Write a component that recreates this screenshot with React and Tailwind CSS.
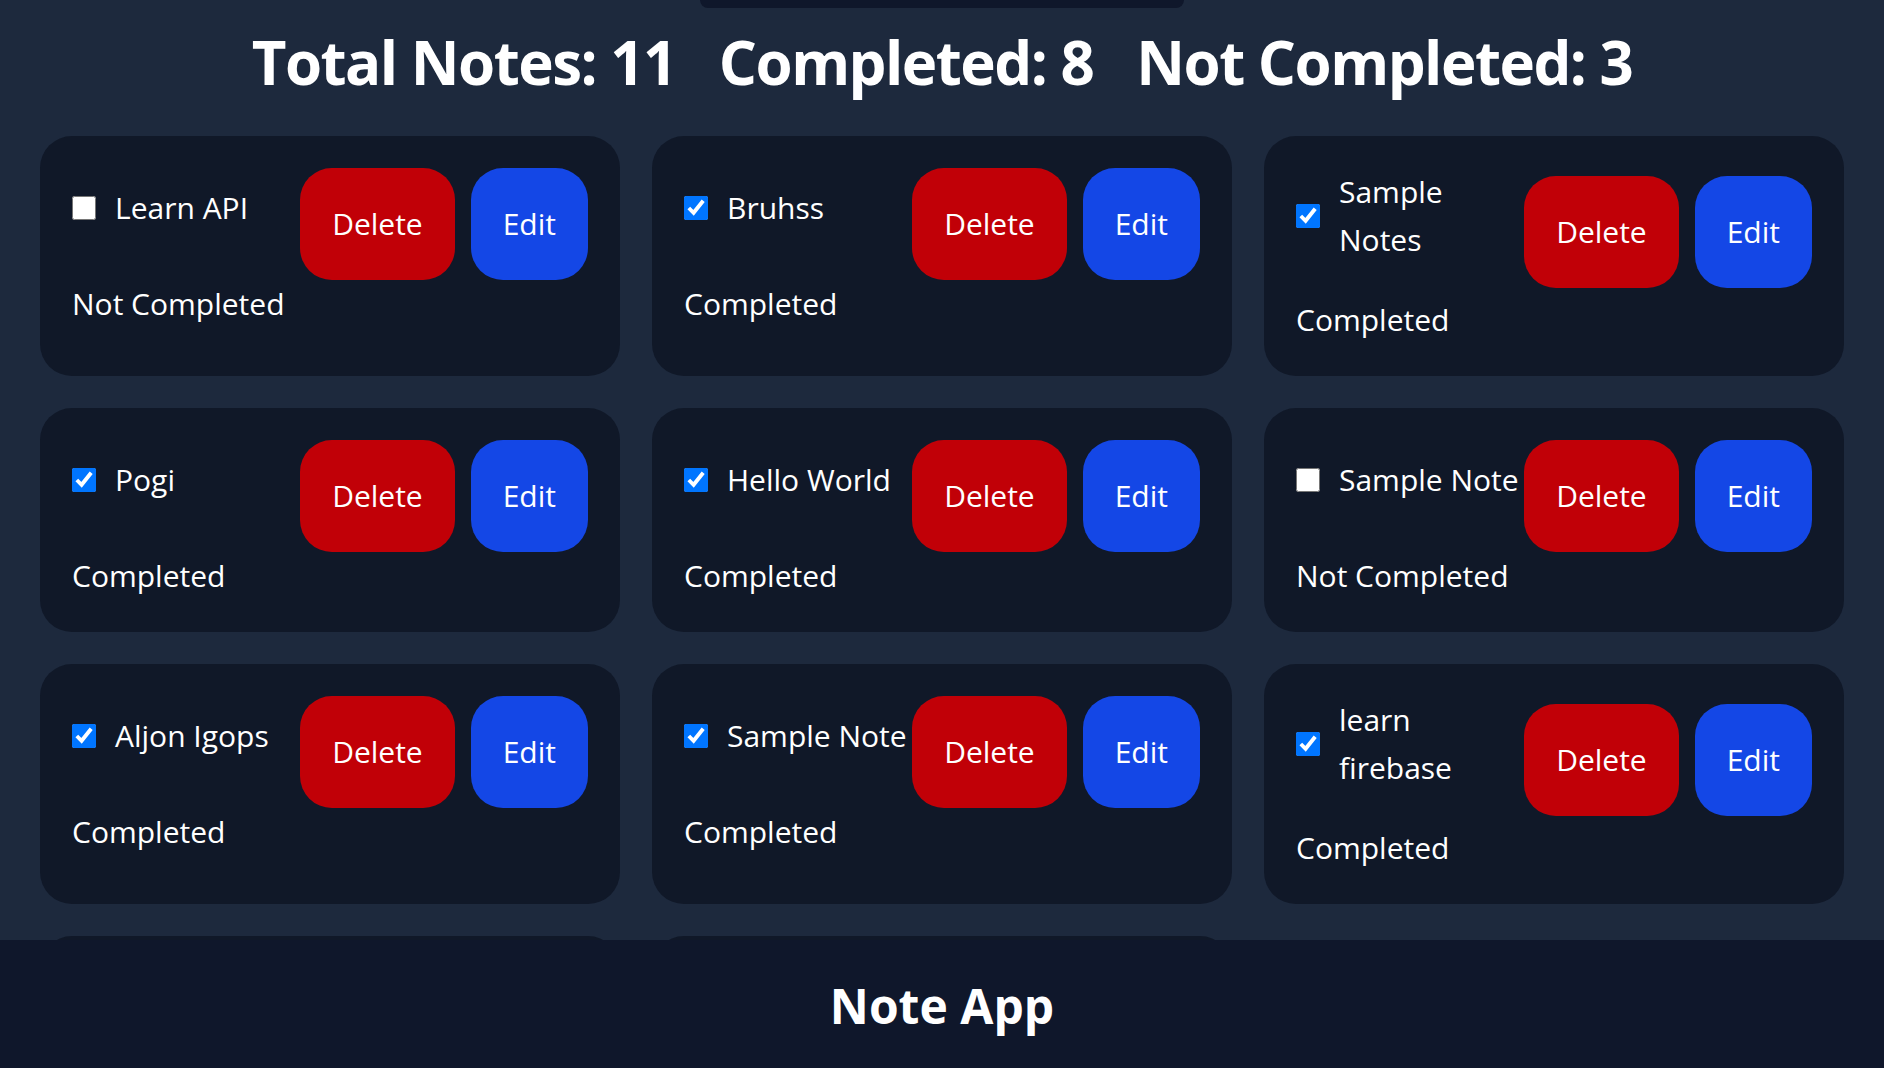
import { useState } from 'react';

const initialNotes = [
  { id: 1, title: 'Learn API', completed: false },
  { id: 2, title: 'Bruhss', completed: true },
  { id: 3, title: 'Sample Notes', completed: true },
  { id: 4, title: 'Pogi', completed: true },
  { id: 5, title: 'Hello World', completed: true },
  { id: 6, title: 'Sample Note', completed: false },
  { id: 7, title: 'Aljon Igops', completed: true },
  { id: 8, title: 'Sample Note', completed: true },
  { id: 9, title: 'learn firebase', completed: true },
  { id: 10, title: 'Test Note', completed: true },
  { id: 11, title: 'Groceries', completed: false },
];

const NoteCard = ({ note, onToggle, onDelete }) => (
  <div className="flex flex-col rounded-4xl bg-gray-900 p-8">
    <div className="flex items-center">
      <label className="flex min-w-0 flex-1 items-center gap-[19px] pb-8">
        <input
          type="checkbox"
          className="h-6 w-6 shrink-0"
          checked={note.completed}
          onChange={() => onToggle(note.id)}
        />
        <span className="text-3xl leading-12">{note.title}</span>
      </label>
      <div className="flex shrink-0 gap-4">
        <button
          type="button"
          className="h-28 rounded-4xl bg-red-700 px-8 text-3xl"
          onClick={() => onDelete(note.id)}
        >
          Delete
        </button>
        <button type="button" className="h-28 rounded-4xl bg-blue-700 px-8 text-3xl">
          Edit
        </button>
      </div>
    </div>
    <p className="text-3xl leading-12">{note.completed ? 'Completed' : 'Not Completed'}</p>
  </div>
);

export default function App() {
  const [notes, setNotes] = useState(initialNotes);

  const toggle = (id) =>
    setNotes((ns) => ns.map((n) => (n.id === id ? { ...n, completed: !n.completed } : n)));
  const remove = (id) => setNotes((ns) => ns.filter((n) => n.id !== id));

  const done = notes.filter((n) => n.completed).length;

  return (
    <div className="min-h-screen bg-slate-800 pb-40 font-['Open_Sans',sans-serif] text-white">
      {/* form card, scrolled mostly out of view */}
      <div className="mx-auto h-2 w-[484px] rounded-b-2xl bg-slate-900" />

      <h1 className="mt-6 mb-11 flex justify-center gap-[43px] text-6xl font-bold tracking-tight">
        <span>Total Notes: {notes.length}</span>
        <span>Completed: {done}</span>
        <span>Not Completed: {notes.length - done}</span>
      </h1>

      <div className="grid grid-cols-3 gap-8 px-10">
        {notes.map((n) => (
          <NoteCard key={n.id} note={n} onToggle={toggle} onDelete={remove} />
        ))}
      </div>

      <footer className="fixed inset-x-0 bottom-0 z-10 flex h-32 items-center justify-center bg-slate-900 pt-1">
        <h2 className="text-5xl font-bold">Note App</h2>
      </footer>
    </div>
  );
}
